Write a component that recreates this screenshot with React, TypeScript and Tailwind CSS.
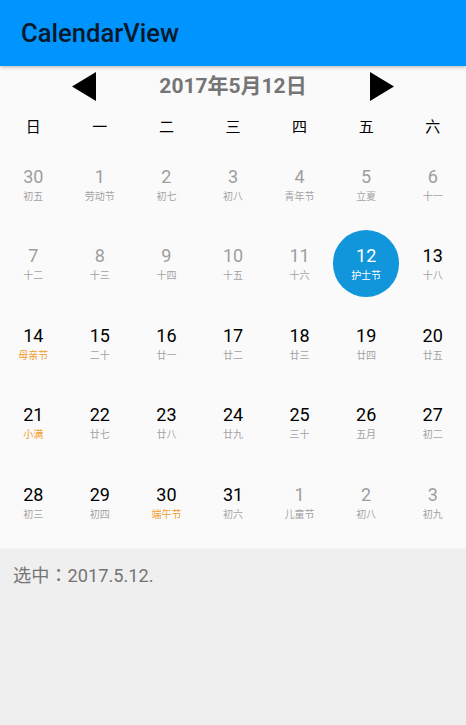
import React from 'react';

type Day = { d: number; sub: string; muted?: boolean; accent?: boolean; selected?: boolean };

const weekdays = ['日', '一', '二', '三', '四', '五', '六'];

const weeks: Day[][] = [
  [
    { d: 30, sub: '初五', muted: true },
    { d: 1, sub: '劳动节', muted: true },
    { d: 2, sub: '初七', muted: true },
    { d: 3, sub: '初八', muted: true },
    { d: 4, sub: '青年节', muted: true },
    { d: 5, sub: '立夏', muted: true },
    { d: 6, sub: '十一', muted: true },
  ],
  [
    { d: 7, sub: '十二', muted: true },
    { d: 8, sub: '十三', muted: true },
    { d: 9, sub: '十四', muted: true },
    { d: 10, sub: '十五', muted: true },
    { d: 11, sub: '十六', muted: true },
    { d: 12, sub: '护士节', selected: true },
    { d: 13, sub: '十八' },
  ],
  [
    { d: 14, sub: '母亲节', accent: true },
    { d: 15, sub: '二十' },
    { d: 16, sub: '廿一' },
    { d: 17, sub: '廿二' },
    { d: 18, sub: '廿三' },
    { d: 19, sub: '廿四' },
    { d: 20, sub: '廿五' },
  ],
  [
    { d: 21, sub: '小满', accent: true },
    { d: 22, sub: '廿七' },
    { d: 23, sub: '廿八' },
    { d: 24, sub: '廿九' },
    { d: 25, sub: '三十' },
    { d: 26, sub: '五月' },
    { d: 27, sub: '初二' },
  ],
  [
    { d: 28, sub: '初三' },
    { d: 29, sub: '初四' },
    { d: 30, sub: '端午节', accent: true },
    { d: 31, sub: '初六' },
    { d: 1, sub: '儿童节', muted: true },
    { d: 2, sub: '初八', muted: true },
    { d: 3, sub: '初九', muted: true },
  ],
];

function DayCell({ day }: { day: Day }) {
  const numColor = day.selected ? 'text-white' : day.muted ? 'text-[#9e9e9e]' : 'text-black';
  const subColor = day.selected ? 'text-white' : day.accent ? 'text-[#f19c2c]' : 'text-[#a3a3a3]';
  return (
    <div className="flex h-[79.5px] items-center justify-center">
      <div
        className={`flex h-[67px] w-[67px] flex-col items-center justify-center rounded-full pt-[2px] ${
          day.selected ? 'bg-[#1296db]' : ''
        }`}
      >
        <span className={`text-[18px] leading-[21px] ${numColor}`}>{day.d}</span>
        <span className={`mt-[3px] text-[10px] leading-[14px] ${subColor}`}>{day.sub}</span>
      </div>
    </div>
  );
}

export default function App() {
  return (
    <div className="flex h-[725px] w-[466px] flex-col overflow-hidden bg-[repeating-conic-gradient(#eeeeee_0_25%,#f0f0f0_0_50%)] bg-[length:4px_4px] font-['Roboto','Noto_Sans_CJK_SC',sans-serif]">
      <header className="relative z-10 flex h-[66px] items-center bg-[#0094ff] pl-[21px] shadow-[0_1px_4px_rgba(0,0,0,0.3)]">
        <h1 className="text-[25.6px] font-medium text-[#08192b]">CalendarView</h1>
      </header>

      <section className="h-[483px] border-b border-[#f3f3f3] bg-[#fafafa]">
        <div className="flex h-[40px] items-center justify-center">
          <svg width="24" height="29" viewBox="0 0 24 29" className="mr-[63px]">
            <path d="M24 0V29L0 14.5Z" fill="#000" />
          </svg>
          <span className="w-[148px] whitespace-nowrap pt-[1px] text-center text-[21px] font-bold text-[#757575]">2017年5月12日</span>
          <svg width="24" height="29" viewBox="0 0 24 29" className="ml-[63px]">
            <path d="M0 0V29L24 14.5Z" fill="#000" />
          </svg>
        </div>

        <div className="grid h-[38px] grid-cols-7 items-center pt-[4px]">
          {weekdays.map((w) => (
            <span key={w} className="text-center text-[15px] text-black">
              {w}
            </span>
          ))}
        </div>

        {weeks.map((week, i) => (
          <div key={i} className="grid grid-cols-7">
            {week.map((day, j) => (
              <DayCell key={j} day={day} />
            ))}
          </div>
        ))}
      </section>

      <p className="pl-[13px] pt-[12px] text-[18.2px] leading-[26px] text-[#757575]">
        选中<span className="font-['Noto_Sans_CJK_TC',sans-serif]">：</span>2017.5.12.
      </p>
    </div>
  );
}
